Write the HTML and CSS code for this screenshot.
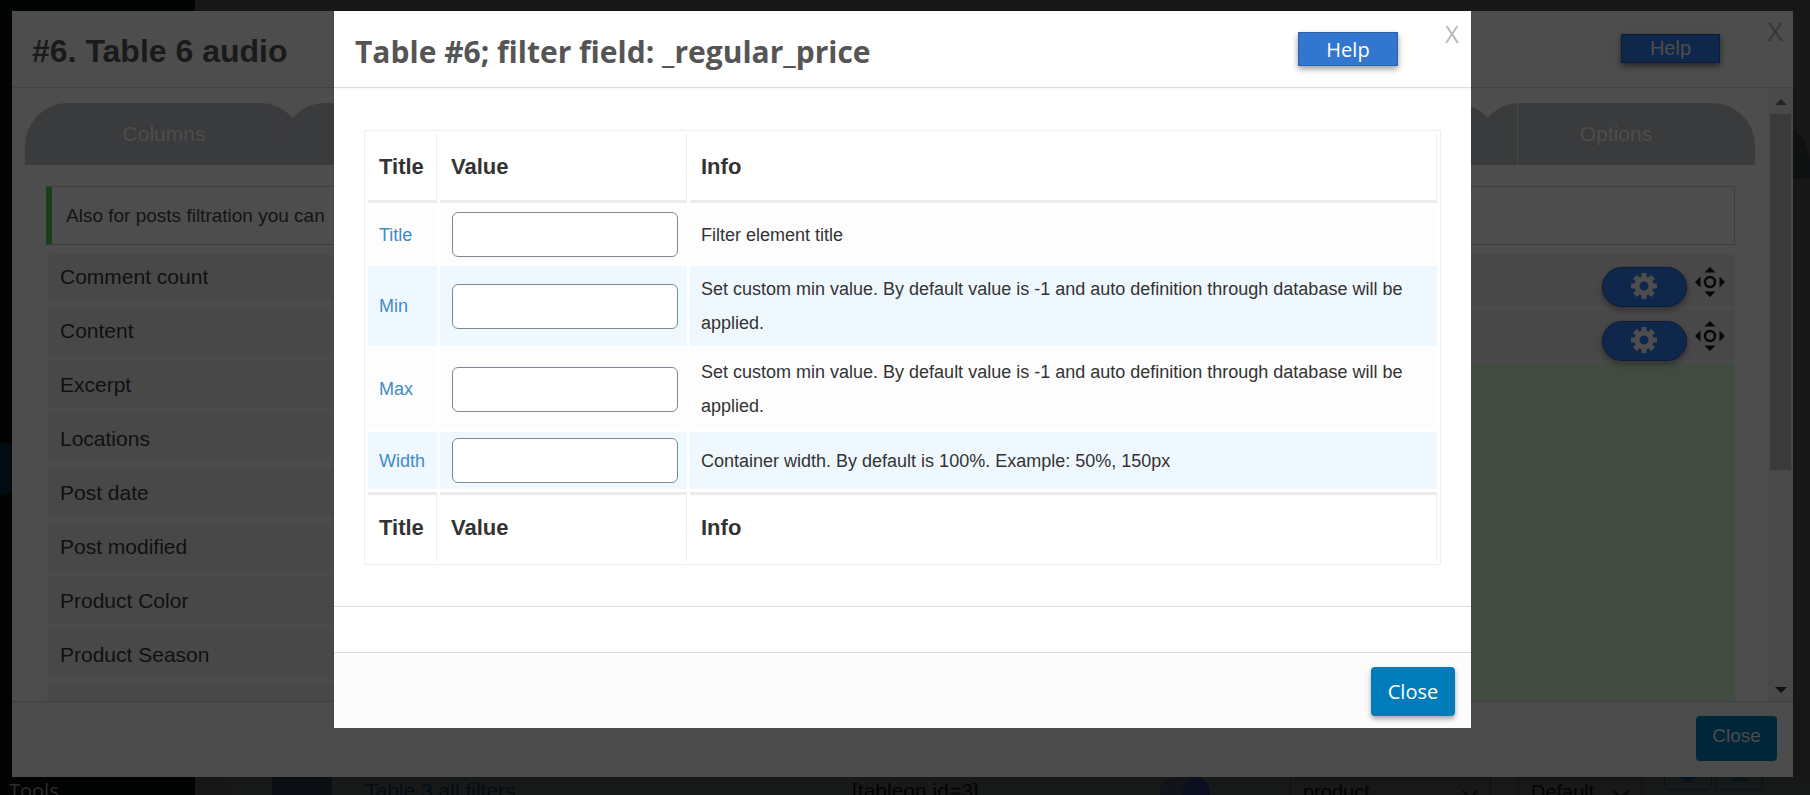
FILE: index.html
```html
<!DOCTYPE html>
<html lang="en">
<head>
<meta charset="utf-8">
<title>Table 6 audio</title>
<link rel="stylesheet" href="styles.css">
</head>
<body>
<svg class="defs" aria-hidden="true">
  <symbol id="gear" viewBox="0 0 26 26">
    <path fill-rule="evenodd" d="M10.500 0h5v3.700l2 .8 2.600-2.600 3.900 3.900-2.600 2.600.9 2.100H26v5h-3.700l-.9 2.100 2.600 2.600-3.900 3.900-2.600-2.600-2 .8V26h-5v-3.700l-2-.8-2.600 2.600L2 20.200l2.600-2.600-.9-2.100H0v-5h3.700l.9-2.100L2 5.800l3.900-3.900 2.600 2.600 2-.8zM13 8.500a4.500 4.500 0 1 0 0 9 4.500 4.500 0 0 0 0-9z"/>
  </symbol>
  <symbol id="move" viewBox="0 0 30 30">
    <path d="M15 0l5.500 5.500h-11zM15 30l5.500-5.500h-11zM0 15l5.500-5.500v11zM30 15l-5.500-5.500v11z"/>
    <circle cx="15" cy="15" r="5" fill="none" stroke="currentColor" stroke-width="2.500"/>
  </symbol>
</svg>

<div class="page">
  <nav class="sidebar">
    <span class="current"></span>
    <a class="tools" href="#">Tools</a>
  </nav>
  <main class="admin">
    <div class="edge-tab"></div>
    <div class="table-row">
      <span class="thumb"></span>
      <a class="row-name" href="#">Table 3 all filters</a>
      <span class="shortcode">[tableon id=3]</span>
      <span class="switch"></span>
      <span class="drop type">product<svg viewBox="0 0 16 10"><path d="M1 1l7 7 7-7"/></svg></span>
      <span class="drop skin">Default<svg viewBox="0 0 16 10"><path d="M1 1l7 7 7-7"/></svg></span>
      <span class="mini"><svg viewBox="0 0 26 26"><use href="#gear"/></svg></span>
      <span class="mini last"><i></i></span>
    </div>
  </main>
</div>

<section class="dialog outer">
  <header class="dialog-head">
    <h2>#6. Table 6 audio</h2>
    <button class="help" type="button">Help</button>
    <button class="x" type="button" aria-label="Dismiss">X</button>
  </header>
  <div class="outer-body">
    <div class="scroll-content">
      <nav class="tabs">
        <a class="tab" href="#">Columns</a>
        <span class="tab wide"></span>
        <a class="tab options" href="#">Options</a>
      </nav>
      <p class="notice">Also for posts filtration you can</p>
      <div class="lists">
        <ul class="list fields">
          <li>Comment count</li>
          <li>Content</li>
          <li>Excerpt</li>
          <li>Locations</li>
          <li>Post date</li>
          <li>Post modified</li>
          <li>Product Color</li>
          <li>Product Season</li>
          <li></li>
        </ul>
        <ul class="list chosen">
          <li><button class="gear" type="button" aria-label="Settings"><svg><use href="#gear"/></svg></button><svg class="move"><use href="#move"/></svg></li>
          <li><button class="gear" type="button" aria-label="Settings"><svg><use href="#gear"/></svg></button><svg class="move"><use href="#move"/></svg></li>
        </ul>
      </div>
    </div>
    <div class="scrollbar">
      <svg viewBox="0 0 12 6"><path d="M6 0l6 6H0z"/></svg>
      <span class="scroll-thumb"></span>
      <svg class="down" viewBox="0 0 12 6"><path d="M0 0h12L6 6z"/></svg>
    </div>
  </div>
  <footer class="dialog-foot"><button class="close" type="button">Close</button></footer>
</section>

<section class="dialog inner" role="dialog" aria-labelledby="inner-title">
  <header class="dialog-head">
    <h2 id="inner-title">Table #6; filter field: _regular_price</h2>
    <button class="help" type="button">Help</button>
    <button class="x" type="button" aria-label="Dismiss">X</button>
  </header>
  <div class="inner-body">
    <table class="settings">
      <thead><tr><th>Title</th><th>Value</th><th>Info</th></tr></thead>
      <tbody>
        <tr><td><label for="f-title">Title</label></td><td><input id="f-title" type="text"></td><td>Filter element title</td></tr>
        <tr><td><label for="f-min">Min</label></td><td><input id="f-min" type="text"></td><td>Set custom min value. By default value is -1 and auto definition through database will be applied.</td></tr>
        <tr><td><label for="f-max">Max</label></td><td><input id="f-max" type="text"></td><td>Set custom min value. By default value is -1 and auto definition through database will be applied.</td></tr>
        <tr><td><label for="f-width">Width</label></td><td><input id="f-width" type="text"></td><td>Container width. By default is 100%. Example: 50%, 150px</td></tr>
      </tbody>
      <tfoot><tr><th>Title</th><th>Value</th><th>Info</th></tr></tfoot>
    </table>
  </div>
  <div class="spacer"></div>
  <footer class="dialog-foot"><button class="close" type="button">Close</button></footer>
</section>
</body>
</html>
```
FILE: styles.css
```css
* { box-sizing: border-box; }

body {
  margin: 0;
  height: 100vh;
  overflow: hidden;
  position: relative;
  background: #171717;
  font-family: "Liberation Sans", Arial, sans-serif;
}

h2, p, ul { margin: 0; padding: 0; }
ul { list-style: none; }
a { text-decoration: none; }
button { font-family: inherit; cursor: pointer; }
.defs { position: absolute; width: 0; height: 0; }

/* admin page under the overlay */
.page { display: flex; height: 100%; }

.sidebar {
  width: 195px;
  background: #020303;
  display: flex;
  flex-direction: column;
  justify-content: space-between;
  overflow: hidden;
}
.sidebar .current { height: 51px; margin-top: 443px; background: #020a12; }
.tools {
  height: 14px;
  padding-left: 9px;
  font: 20px/20px "Open Sans", sans-serif;
  color: #2c2c2c;
}

.admin {
  flex: 1;
  min-width: 0;
  display: flex;
  flex-direction: column;
  justify-content: space-between;
  overflow: hidden;
}
.edge-tab {
  width: 60px;
  height: 59px;
  margin-top: 120px;
  align-self: flex-end;
  background: #0f1012;
  border-radius: 0 43px 0 0;
}
.table-row {
  height: 18px;
  display: flex;
  background: #171918;
  color: #030303;
  font-size: 21px;
  line-height: 28px;
  white-space: nowrap;
  margin-left: 34px;
  overflow: hidden;
}
.thumb { width: 60px; margin-left: 43px; background: #0b0f14; }
.row-name { margin-left: 33px; width: 487px; color: #020c14; }
.shortcode { width: 308px; }
.switch {
  width: 50px;
  height: 30px;
  border-radius: 15px;
  background: radial-gradient(circle at 37px 15px, #0a0e1e 14px, #12141a 15px);
}
.drop {
  height: 30px;
  display: flex;
  align-items: flex-start;
  justify-content: space-between;
  padding: 0 12px;
  border: 1px solid #111;
  background: #181818;
  font-size: 20px;
}
.drop svg { width: 16px; height: 10px; margin-top: 12px; fill: none; stroke: #060606; stroke-width: 2; }
.type { width: 201px; margin-left: 80px; }
.skin { width: 124px; margin-left: 27px; }
.mini {
  width: 48px;
  height: 13px;
  margin-left: 22px;
  border: 1px solid #031320;
  border-top: 0;
  border-radius: 0 0 5px 5px;
  display: flex;
  justify-content: center;
  align-items: flex-end;
  overflow: hidden;
}
.mini svg { width: 20px; height: 20px; flex: none; margin-bottom: 7px; fill: #031320; }
.mini i { width: 16px; height: 3px; margin-bottom: 8px; background: #031320; }
.mini.last { margin-left: 3px; }

/* shared dialog parts */
.dialog { position: absolute; display: flex; flex-direction: column; }
.dialog-head {
  height: 77px;
  flex: none;
  display: flex;
  align-items: flex-start;
  border-bottom: 1px solid #ddd;
}
.dialog-head h2 { flex: 1; line-height: 40px; font-weight: bold; white-space: nowrap; }
.x { border: 0; padding: 0; background: none; text-align: center; width: 20px; }
.help { padding: 0; border: 1px solid #2b61ac; }
.dialog-foot { flex: none; display: flex; justify-content: flex-end; align-items: flex-start; }
.close { border: 0; border-radius: 4px; padding: 0; }

/* dimmed dialog */
.outer { inset: 11px 17px 18px 12px; background: #4d4d4d; }
.outer .dialog-head { border-color: #434343; padding: 0 8px 0 20px; }
.outer h2 { font-size: 32px; color: #1a1a1a; margin-top: 20px; }
.outer .help {
  width: 99px;
  height: 29px;
  margin-top: 23px;
  background: #0f274a;
  border-color: #0a1c38;
  color: #4d4d4d;
  font-size: 20px;
  line-height: 27px;
  box-shadow: 0 3px 6px rgba(0, 0, 0, .5);
}
.outer .x { margin: 6px 0 0 45px; font-size: 25px; line-height: 30px; color: #383838; }

.outer-body { flex: 1; min-height: 0; display: flex; overflow: hidden; }
.scroll-content { flex: 1; min-width: 0; padding: 15px 13px 0; display: flex; flex-direction: column; }
.tabs { display: flex; flex: none; }
.tab {
  width: 278px;
  height: 62px;
  line-height: 62px;
  text-align: center;
  font-size: 21px;
  color: #4d4d4d;
  background: #3a3b3d;
  border-radius: 43px 43px 0 0;
}
.tab + .tab { margin-left: -21px; }
.tab.wide { flex: 1; }
.options {
  background: linear-gradient(#484848, #484848) 40px 0 / 1px 100% no-repeat #3a3b3d;
}
.notice {
  flex: none;
  margin: 21px 20px 0 21px;
  height: 59px;
  line-height: 57px;
  padding-left: 14px;
  border: 1px solid #3e3e3e;
  border-left: 6px solid #1a3d1e;
  font-size: 19px;
  color: #141414;
}
.lists { flex: 1; min-height: 0; margin: 10px 20px 0 21px; display: flex; overflow: hidden; }
.list { flex: 1; background: #4b4b4b; padding-left: 3px; }
.list li {
  height: 48px;
  margin-bottom: 6px;
  padding-left: 11px;
  font-size: 21px;
  line-height: 50px;
  color: #101010;
  background: #484848;
}
.list li:first-child { height: 45px; line-height: 43px; }
.chosen { background: #414b41; padding: 0; }
.chosen li {
  display: flex;
  justify-content: flex-end;
  align-items: flex-start;
  padding: 12px 10px 0 0;
  height: 54px;
  margin: 0;
  border-bottom: 3px solid #4b4b4b;
}
.chosen li:first-child { height: 54px; }
.gear {
  width: 85px;
  height: 40px;
  padding: 0;
  display: flex;
  justify-content: center;
  border: 1px solid #0a1c38;
  border-radius: 20px;
  background: #0f274a;
  box-shadow: 0 3px 6px rgba(0, 0, 0, .35);
}
.gear svg { width: 26px; height: 26px; margin-top: 5px; margin-right: 2px; fill: #4d4d4d; }
.move { width: 30px; height: 30px; margin-left: 8px; color: #080808; fill: #080808; }

.scrollbar {
  width: 25px;
  flex: none;
  display: flex;
  flex-direction: column;
  align-items: center;
  padding: 11px 0 8px;
  background: #494949;
}
.scrollbar svg { width: 12px; height: 6px; fill: #242424; flex: none; }
.scrollbar .down { margin-top: auto; fill: #101010; }
.scroll-thumb { width: 21px; height: 60%; margin-top: 9px; background: #3a3a3a; }

.outer .dialog-foot { height: 76px; padding: 14px 16px 0; border-top: 1px solid #3f3f3f; background: #4b4b4b; }
.outer .close {
  width: 81px;
  height: 45px;
  background: #00263a;
  color: #4d4d4d;
  font-size: 19px;
  line-height: 40px;
  padding-bottom: 5px;
}

/* active dialog */
.inner { top: 11px; left: 334px; right: 339px; background: #fff; }
.inner .dialog-head { padding: 0 9px 0 21px; border-color: #dcdcdc; box-shadow: 0 1px 3px rgba(0, 0, 0, .05); }
.inner h2 { margin-top: 21px; font-family: "Open Sans", sans-serif; font-size: 30px; color: #555; }
.inner .help {
  width: 100px;
  height: 34px;
  margin-top: 21px;
  padding-top: 2px;
  background: #3276d0;
  color: #fff;
  font: 20px/30px "Open Sans", sans-serif;
  box-shadow: 0 3px 6px rgba(0, 0, 0, .4);
}
.inner .x { margin: 9px 0 0 44px; font: 24px/28px "Open Sans", sans-serif; color: #b8b8bc; }

.inner-body { padding: 42px 30px 41px; }
.settings {
  width: 100%;
  table-layout: fixed;
  border: 1px solid #eee;
  border-collapse: separate;
  border-spacing: 3px;
  color: #333;
}
.settings th {
  height: 69px;
  padding: 0 11px 1px;
  text-align: left;
  font-size: 22px;
  line-height: 34px;
  border-right: 1px solid #eee;
  border-bottom: 3px solid #ececec;
}
.settings tfoot th { border-bottom: 0; border-top: 3px solid #ececec; }
.settings td { height: 57px; padding: 6px 11px; font-size: 18px; line-height: 34px; background: #fdfdfd; }
.settings tr:nth-child(even) td { background: #f0f8ff; }
.settings tr > :first-child { width: 69px; }
.settings tr > :nth-child(2) { width: 247px; }
.settings label { color: #428bca; }
.settings input {
  display: block;
  width: 226px;
  height: 45px;
  margin-left: 1px;
  padding: 0 10px;
  border: 1px solid #7e8993;
  border-radius: 6px;
  background: #fff;
  font: inherit;
}
.spacer { height: 46px; border-top: 1px solid #ddd; }
.inner .dialog-foot { height: 76px; padding: 14px 16px 0; border-top: 1px solid #dcdcdc; background: #fcfcfc; }
.inner .close {
  width: 84px;
  height: 49px;
  padding-top: 1px;
  background: #007cba;
  color: #fff;
  font: 20px/48px "Open Sans", sans-serif;
  box-shadow: 0 3px 5px rgba(0, 0, 0, .35);
}
```
